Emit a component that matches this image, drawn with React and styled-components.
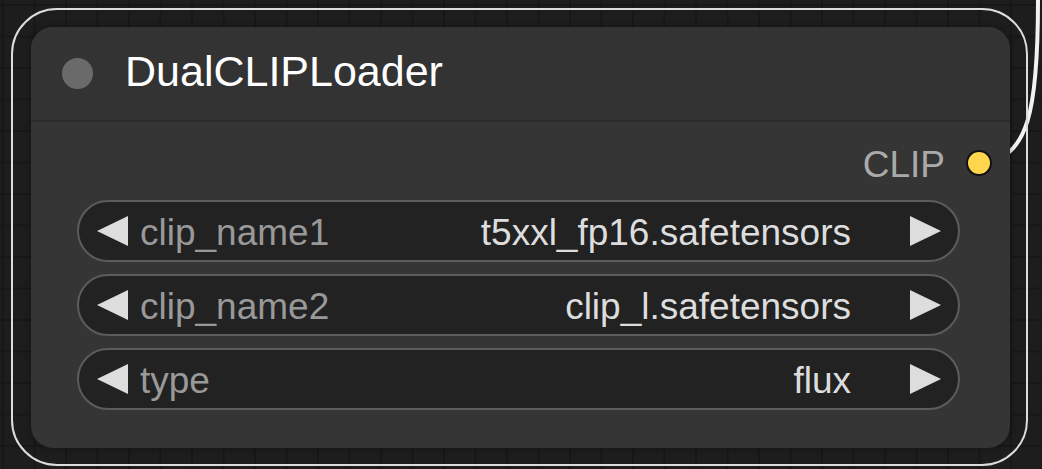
import React from 'react';
import styled, { createGlobalStyle } from 'styled-components';

const GlobalStyle = createGlobalStyle`
  html, body {
    margin: 0;
    padding: 0;
    background: #1d1d1d;
  }
  body {
    font-family: 'Liberation Sans', Arial, sans-serif;
  }
`;

const widgets = [
  { name: 'clip_name1', value: 't5xxl_fp16.safetensors' },
  { name: 'clip_name2', value: 'clip_l.safetensors' },
  { name: 'type', value: 'flux' },
];

export default function App() {
  return (
    <>
      <GlobalStyle />
      <Canvas>
        <Wire width="1042" height="469" viewBox="0 0 1042 469">
          <path d="M 990 163 C 1026 150, 1038 118, 1038 0" />
        </Wire>

        <Selection>
          <Node>
            <Title>
              <TitleDot />
              <TitleText>DualCLIPLoader</TitleText>
            </Title>

            <Body>
              <Output>
                <OutputLabel>CLIP</OutputLabel>
                <Slot />
              </Output>

              <Widgets>
                {widgets.map((w) => (
                  <Combo key={w.name}>
                    <Arrow $dir="left" />
                    <Label>{w.name}</Label>
                    <Value>{w.value}</Value>
                    <Arrow $dir="right" />
                  </Combo>
                ))}
              </Widgets>
            </Body>
          </Node>
        </Selection>
      </Canvas>
    </>
  );
}

const Canvas = styled.div`
  position: relative;
  width: 1042px;
  height: 469px;
  box-sizing: border-box;
  padding: 8px 0 0 11px;
  overflow: hidden;

  background-color: #1d1d1d;
  background-image:
    linear-gradient(to right, #171717 2px, transparent 2px),
    linear-gradient(to bottom, #171717 2px, transparent 2px);
  background-size: 31.5px 31.5px;
  background-position: 2px 4px;
`;

// link wire leaving the CLIP slot, drawn under the node
const Wire = styled.svg`
  position: absolute;
  left: 0;
  top: 0;
  z-index: 0;

  path {
    fill: none;
    stroke: #f2f2f2;
    stroke-width: 4;
  }
`;

const Selection = styled.div`
  position: relative;
  z-index: 1;

  width: 1017px;
  height: 458px;
  box-sizing: border-box;
  padding: 17px 16px 16px 18px;

  border: 2px solid #dcdcdc;
  border-radius: 46px;
`;

const Node = styled.div`
  display: flex;
  flex-direction: column;

  height: 100%;
  box-sizing: border-box;

  background: #353535;
  border-radius: 22px;
  box-shadow: 0 0 6px rgba(0, 0, 0, 0.35);
  overflow: hidden;
`;

const Title = styled.div`
  display: flex;
  align-items: center;
  gap: 32px;

  height: 93px;
  flex: none;
  padding-left: 31px;

  background: #333333;
  border-bottom: 2px solid #2b2b2b;
`;

const TitleDot = styled.div`
  width: 31px;
  height: 31px;
  border-radius: 50%;
  background: #6a6a6a;
`;

const TitleText = styled.div`
  font-size: 43px;
  line-height: 1;
  color: #ffffff;
  margin-top: -4px;
`;

const Body = styled.div`
  display: flex;
  flex-direction: column;
  padding: 18px 50px 0 46px;
`;

const Output = styled.div`
  display: flex;
  align-items: center;
  justify-content: flex-end;
  gap: 21px;

  height: 46px;
  margin-right: -32px;
`;

const OutputLabel = styled.div`
  font-size: 37px;
  line-height: 1;
  color: #aaaaaa;
  margin-top: 3px;
`;

const Slot = styled.div`
  width: 22px;
  height: 22px;
  border-radius: 50%;
  background: #fdd64d;
  border: 2.5px solid #111111;
`;

const Widgets = styled.div`
  display: flex;
  flex-direction: column;
  gap: 12px;
  margin-top: 14px;
`;

const Combo = styled.div`
  display: flex;
  align-items: center;

  height: 62px;
  box-sizing: border-box;
  padding: 0 17px 0 18px;

  background: #222222;
  border: 2px solid #5c5c5c;
  border-radius: 31px;
`;

const Arrow = styled.div`
  width: 0;
  height: 0;
  flex: none;
  border-top: 15px solid transparent;
  border-bottom: 15px solid transparent;
  ${(p) =>
    p.$dir === 'left'
      ? 'border-right: 31px solid #dddddd; margin-right: 12px;'
      : 'border-left: 31px solid #dddddd; margin-left: 59px;'}
`;

const Label = styled.div`
  font-size: 37px;
  line-height: 1;
  color: #999999;
  margin-top: 2px;
`;

const Value = styled.div`
  flex: 1;
  text-align: right;
  font-size: 37px;
  line-height: 1;
  color: #dddddd;
  margin-top: 2px;
`;
